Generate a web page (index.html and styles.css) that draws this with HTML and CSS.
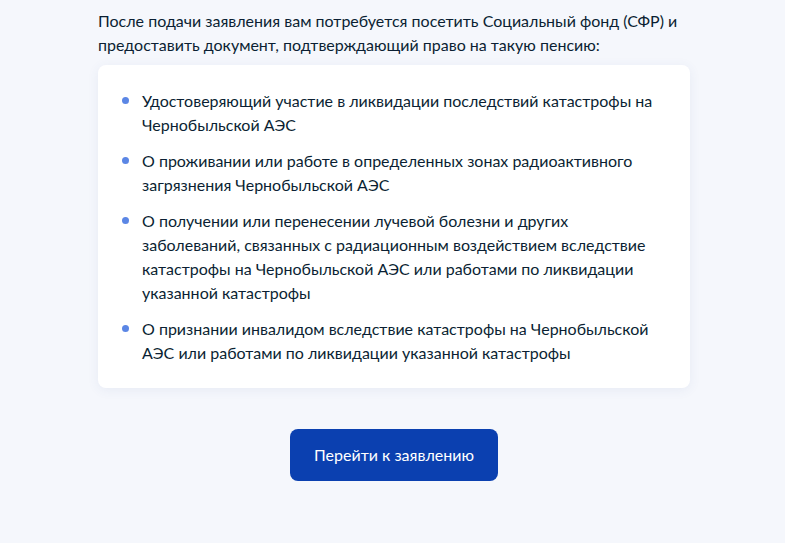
FILE: index.html
```html
<!DOCTYPE html>
<html lang="ru">
<head>
<meta charset="utf-8">
<link rel="stylesheet" href="styles.css">
</head>
<body>
<main class="page">
  <p class="intro">После подачи заявления вам потребуется посетить Социальный фонд (СФР) и предоставить документ, подтверждающий право на такую пенсию:</p>
  <div class="card">
    <ul class="list">
      <li>Удостоверяющий участие в ликвидации последствий катастрофы на Чернобыльской АЭС</li>
      <li>О проживании или работе в определенных зонах радиоактивного загрязнения Чернобыльской АЭС</li>
      <li>О получении или перенесении лучевой болезни и других заболеваний, связанных с радиационным воздействием вследствие катастрофы на Чернобыльской АЭС или работами по ликвидации указанной катастрофы</li>
      <li>О признании инвалидом вследствие катастрофы на Чернобыльской АЭС или работами по ликвидации указанной катастрофы</li>
    </ul>
  </div>
  <div class="actions">
    <button class="btn">Перейти к заявлению</button>
  </div>
</main>
</body>
</html>
```
FILE: styles.css
```css
html, body {
  margin: 0;
  padding: 0;
  background: #f5f7fc;
}
body {
  font-family: Lato, "Noto Sans", sans-serif;
  font-size: 16px;
  line-height: 24px;
  color: #0b1f33;
  height: 543px;
  overflow: hidden;
}
.page {
  width: 592px;
  margin-left: 98px;
  padding-top: 9px;
}
.intro {
  margin: 0;
}
.card {
  margin-top: 8px;
  background: #ffffff;
  border-radius: 8px;
  box-shadow: 0 2px 12px rgba(66, 94, 150, 0.08);
  padding: 24px 24px 23px 24px;
}
.list {
  list-style: none;
  margin: 0;
  padding: 0;
  display: flex;
  flex-direction: column;
  gap: 12px;
}
.list li {
  position: relative;
  padding-left: 20px;
}
.list li::before {
  content: "";
  position: absolute;
  left: 0;
  top: 8px;
  width: 7px;
  height: 7px;
  border-radius: 50%;
  background: #5b86e5;
}
.actions {
  display: flex;
  justify-content: center;
  margin-top: 41px;
}
.btn {
  height: 52px;
  padding: 0 24px;
  border: none;
  border-radius: 8px;
  background: #0b40b0;
  color: #ffffff;
  font-family: Lato, "Noto Sans", sans-serif;
  font-size: 16px;
  line-height: 24px;
  cursor: pointer;
}
```
